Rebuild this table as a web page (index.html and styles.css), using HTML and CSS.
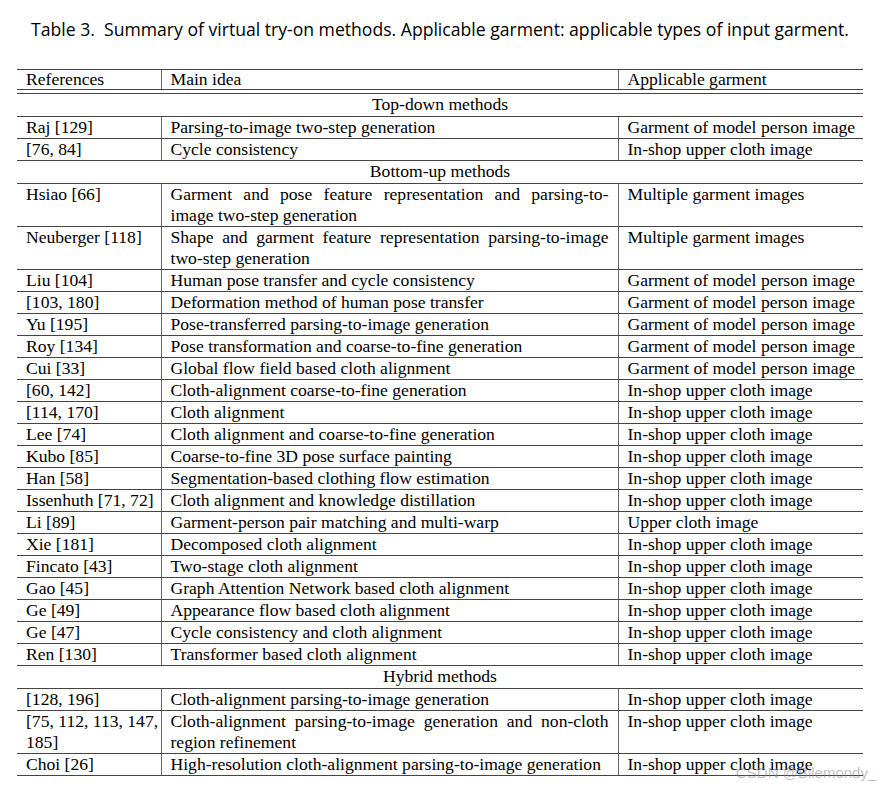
FILE: index.html
```html
<!DOCTYPE html>
<html lang="en">
<head>
<meta charset="utf-8">
<title>Table 3</title>
<link rel="stylesheet" href="styles.css">
</head>
<body>
<div class="page">
  <div class="figure">
    <p class="caption">Table 3.&nbsp; Summary of virtual try-on methods. Applicable garment: applicable types of input garment.</p>
    <table class="summary">
      <colgroup>
        <col class="c-ref">
        <col class="c-idea">
        <col class="c-gar">
      </colgroup>
      <thead>
        <tr><th>References</th><th>Main idea</th><th>Applicable garment</th></tr>
      </thead>
      <tbody>
        <tr class="gap"><td colspan="3"></td></tr>
        <tr class="section"><td colspan="3">Top-down methods</td></tr>
        <tr><td>Raj [129]</td><td>Parsing-to-image two-step generation</td><td>Garment of model person image</td></tr>
        <tr><td>[76, 84]</td><td>Cycle consistency</td><td>In-shop upper cloth image</td></tr>
        <tr class="section"><td colspan="3">Bottom-up methods</td></tr>
        <tr><td>Hsiao [66]</td><td><span class="jl">Garment and pose feature representation and parsing-to-</span><span class="ll">image two-step generation</span></td><td>Multiple garment images</td></tr>
        <tr><td>Neuberger [118]</td><td><span class="jl">Shape and garment feature representation parsing-to-image</span><span class="ll">two-step generation</span></td><td>Multiple garment images</td></tr>
        <tr><td>Liu [104]</td><td>Human pose transfer and cycle consistency</td><td>Garment of model person image</td></tr>
        <tr><td>[103, 180]</td><td>Deformation method of human pose transfer</td><td>Garment of model person image</td></tr>
        <tr><td>Yu [195]</td><td>Pose-transferred parsing-to-image generation</td><td>Garment of model person image</td></tr>
        <tr><td>Roy [134]</td><td>Pose transformation and coarse-to-fine generation</td><td>Garment of model person image</td></tr>
        <tr><td>Cui [33]</td><td>Global flow field based cloth alignment</td><td>Garment of model person image</td></tr>
        <tr><td>[60, 142]</td><td>Cloth-alignment coarse-to-fine generation</td><td>In-shop upper cloth image</td></tr>
        <tr><td>[114, 170]</td><td>Cloth alignment</td><td>In-shop upper cloth image</td></tr>
        <tr><td>Lee [74]</td><td>Cloth alignment and coarse-to-fine generation</td><td>In-shop upper cloth image</td></tr>
        <tr><td>Kubo [85]</td><td>Coarse-to-fine 3D pose surface painting</td><td>In-shop upper cloth image</td></tr>
        <tr><td>Han [58]</td><td>Segmentation-based clothing flow estimation</td><td>In-shop upper cloth image</td></tr>
        <tr><td>Issenhuth [71, 72]</td><td>Cloth alignment and knowledge distillation</td><td>In-shop upper cloth image</td></tr>
        <tr><td>Li [89]</td><td>Garment-person pair matching and multi-warp</td><td>Upper cloth image</td></tr>
        <tr><td>Xie [181]</td><td>Decomposed cloth alignment</td><td>In-shop upper cloth image</td></tr>
        <tr><td>Fincato [43]</td><td>Two-stage cloth alignment</td><td>In-shop upper cloth image</td></tr>
        <tr><td>Gao [45]</td><td>Graph Attention Network based cloth alignment</td><td>In-shop upper cloth image</td></tr>
        <tr><td>Ge [49]</td><td>Appearance flow based cloth alignment</td><td>In-shop upper cloth image</td></tr>
        <tr><td>Ge [47]</td><td>Cycle consistency and cloth alignment</td><td>In-shop upper cloth image</td></tr>
        <tr><td>Ren [130]</td><td>Transformer based cloth alignment</td><td>In-shop upper cloth image</td></tr>
        <tr class="section"><td colspan="3">Hybrid methods</td></tr>
        <tr><td>[128, 196]</td><td>Cloth-alignment parsing-to-image generation</td><td>In-shop upper cloth image</td></tr>
        <tr><td><span class="jl">[75, 112, 113, 147,</span><span class="ll">185]</span></td><td><span class="jl">Cloth-alignment parsing-to-image generation and non-cloth</span><span class="ll">region refinement</span></td><td>In-shop upper cloth image</td></tr>
        <tr><td>Choi [26]</td><td>High-resolution cloth-alignment parsing-to-image generation</td><td>In-shop upper cloth image</td></tr>
      </tbody>
    </table>
  </div>
  <div class="watermark">CSDN @Bilemondy_</div>
</div>
</body>
</html>
```

FILE: styles.css
```css
html, body {
  margin: 0;
  padding: 0;
  background: #ffffff;
}

.page {
  position: relative;
  width: 893px;
  height: 791px;
  overflow: hidden;
}

.figure {
  padding: 0 0 0 17px;
  width: 846px;
}

.caption {
  margin: 0;
  padding-top: 16px;
  height: 69px;
  box-sizing: border-box;
  font-family: "Open Sans", "Liberation Sans", sans-serif;
  font-size: 17.6px;
  line-height: 26px;
  color: #000;
  text-align: center;
  white-space: nowrap;
}

.summary {
  width: 846px;
  border-collapse: collapse;
  table-layout: fixed;
  font-family: "Liberation Serif", "DejaVu Serif", serif;
  font-size: 17.6px;
  line-height: 21px;
  color: #000;
}

.c-ref { width: 144px; }
.c-idea { width: 457px; }
.c-gar { width: 245px; }

.summary th,
.summary td {
  padding: 0 9px;
  text-align: left;
  vertical-align: top;
  font-weight: normal;
  white-space: nowrap;
  border-top: 1px solid #444;
  border-bottom: 1px solid #444;
}

.summary th + th,
.summary td + td {
  border-left: 1px solid #6a6a6a;
}

.summary thead th {
  height: 19px;
  line-height: 19px;
}

.summary tr.gap td {
  height: 3px;
  padding: 0;
  line-height: 0;
  font-size: 0;
  border-top: 1px solid #444;
}

.summary tr.section td {
  text-align: center;
  height: 20px;
  line-height: 20px;
  padding-bottom: 2px;
}

.jl {
  display: block;
  text-align: justify;
  text-align-last: justify;
}

.ll {
  display: block;
}

.watermark {
  position: absolute;
  left: 736px;
  top: 764px;
  font-family: "Liberation Sans", Arial, sans-serif;
  font-size: 15px;
  line-height: 18px;
  color: rgba(130, 130, 130, 0.5);
  white-space: nowrap;
}
```
